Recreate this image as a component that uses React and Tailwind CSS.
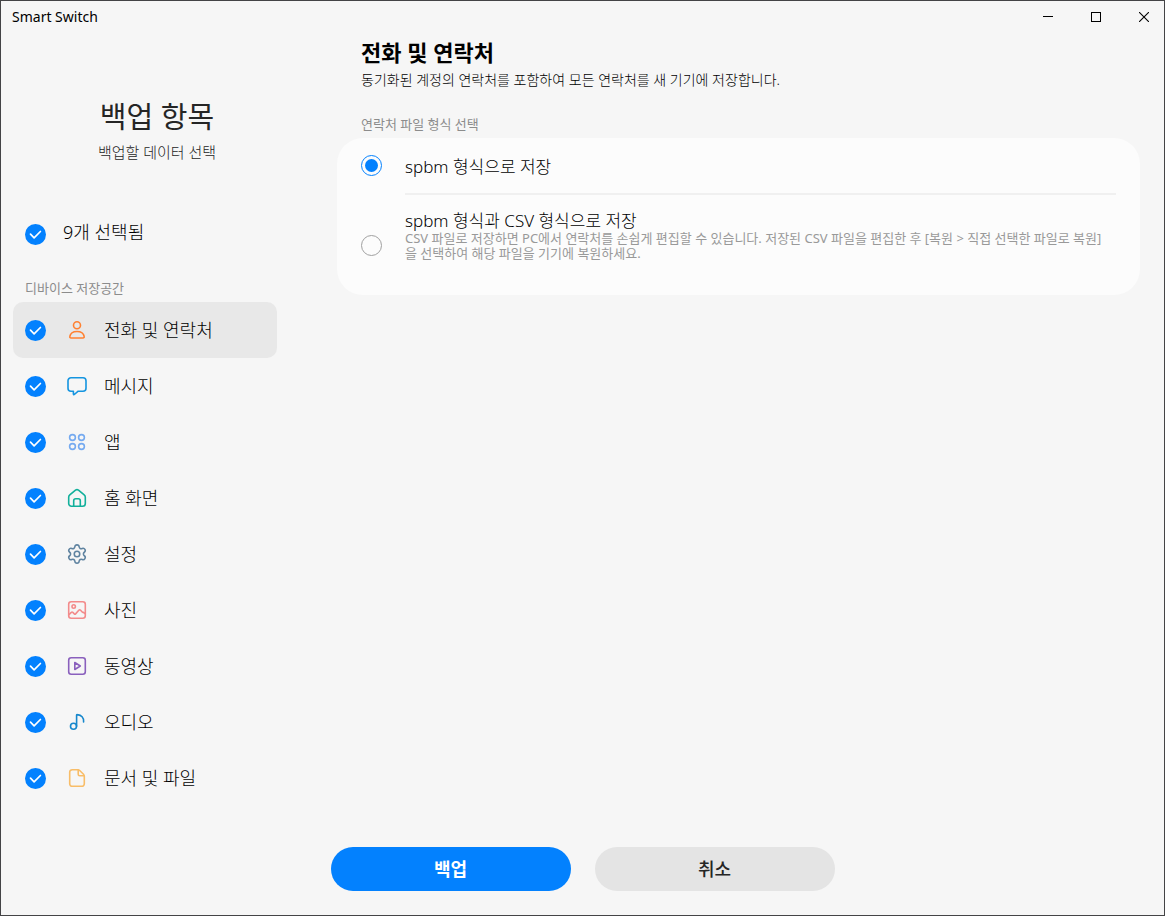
import { useState } from "react";
import { Settings } from "lucide-react";

const Icon = ({ color, children }) => (
  <svg
    width="24"
    height="24"
    viewBox="0 0 24 24"
    fill="none"
    stroke={color}
    strokeWidth="1.6"
    strokeLinecap="round"
    strokeLinejoin="round"
    aria-hidden="true"
  >
    {children}
  </svg>
);

const categories = [
  {
    id: "contacts",
    name: "전화 및 연락처",
    icon: (
      <Icon color="#ff8132">
        <circle cx="12" cy="7.3" r="3.5" />
        <path d="M6 20h12c.9 0 1.4-.6 1.2-1.5C18.6 15.3 15.8 13.5 12 13.5s-6.6 1.8-7.2 5C4.6 19.4 5.1 20 6 20z" />
      </Icon>
    ),
  },
  {
    id: "messages",
    name: "메시지",
    icon: (
      <Icon color="#1595e0">
        <path d="M6 3.7h12a3 3 0 0 1 3 3v7.5a3 3 0 0 1-3 3h-4.8l-3.9 3.3c-.4.4-.9.2-.9-.4v-2.9H6a3 3 0 0 1-3-3V6.7a3 3 0 0 1 3-3z" />
      </Icon>
    ),
  },
  {
    id: "apps",
    name: "앱",
    icon: (
      <Icon color="#75aaf0">
        <circle cx="7.5" cy="7.5" r="2.9" />
        <circle cx="16.5" cy="7.5" r="2.9" />
        <circle cx="7.5" cy="16.5" r="2.9" />
        <circle cx="16.5" cy="16.5" r="2.9" />
      </Icon>
    ),
  },
  {
    id: "home",
    name: "홈 화면",
    icon: (
      <Icon color="#12b09b">
        <path d="M3.7 11.2c0-.9.4-1.7 1.1-2.3l5.7-4.7c.9-.7 2.1-.7 3 0l5.7 4.7c.7.6 1.1 1.4 1.1 2.3v6.3a2.7 2.7 0 0 1-2.7 2.7H6.4a2.7 2.7 0 0 1-2.7-2.7z" />
        <path d="M8.7 20v-5.2a2 2 0 0 1 2-2h2.6a2 2 0 0 1 2 2V20" />
      </Icon>
    ),
  },
  {
    id: "settings",
    name: "설정",
    icon: <Settings size={22} strokeWidth={1.7} color="#5f83a0" />,
  },
  {
    id: "photos",
    name: "사진",
    icon: (
      <Icon color="#f38b8b">
        <rect x="3.7" y="3.7" width="16.6" height="16.6" rx="2.5" />
        <circle cx="8.7" cy="8.5" r="1.7" />
        <path d="M4 16.6l2.3-2.2c.5-.5 1-.5 1.5 0l1.5 1.5c.4.4.9.4 1.3 0l3.2-3.6c.6-.6 1.2-.6 1.8 0l1.6 1.7c.4.4.8.4 1.2.3l1.6 1.2" />
      </Icon>
    ),
  },
  {
    id: "videos",
    name: "동영상",
    icon: (
      <Icon color="#8a60bd">
        <rect x="3.7" y="3.7" width="16.6" height="16.6" rx="2.5" />
        <path d="M9.8 8.5v7l5.5-3.5z" />
      </Icon>
    ),
  },
  {
    id: "audio",
    name: "오디오",
    icon: (
      <Icon color="#1687cc">
        <circle cx="8.5" cy="16.3" r="3" />
        <path d="M11.6 16.3V5.2c0-.5.3-.7.8-.6 3.7.5 6.7 3 6.2 7.4" />
      </Icon>
    ),
  },
  {
    id: "documents",
    name: "문서 및 파일",
    icon: (
      <Icon color="#f8bd68">
        <path d="M7.2 3.7h5.6c.7 0 1.4.3 1.9.8l3.8 3.8c.5.5.8 1.2.8 1.9v7.6a2.5 2.5 0 0 1-2.5 2.5H7.2a2.5 2.5 0 0 1-2.5-2.5V6.2a2.5 2.5 0 0 1 2.5-2.5z" />
        <path d="M13.2 4v4.3c0 .9.6 1.5 1.5 1.5H19" />
      </Icon>
    ),
  },
];

const Checkbox = ({ checked, onChange, ...props }) => (
  <span className="grid size-[21px] shrink-0">
    <input
      type="checkbox"
      checked={checked}
      onChange={onChange}
      className="col-start-1 row-start-1 size-full appearance-none rounded-full border border-[#a0a0a0] checked:border-0 checked:bg-[#0381fe]"
      {...props}
    />
    {checked && (
      <svg
        viewBox="0 0 21 21"
        fill="none"
        stroke="white"
        strokeWidth="1.7"
        strokeLinecap="round"
        strokeLinejoin="round"
        className="pointer-events-none col-start-1 row-start-1 size-full"
      >
        <path d="M5.5 10.2l3.6 3.6 6.3-6.3" />
      </svg>
    )}
  </span>
);

const Radio = ({ checked, onChange, id }) => (
  <span className="grid size-[21px] shrink-0 place-items-center">
    <input
      id={id}
      type="radio"
      name="format"
      checked={checked}
      onChange={onChange}
      className="col-start-1 row-start-1 size-full appearance-none rounded-full border border-[#a0a0a0] checked:border-[#0381fe]"
    />
    {checked && (
      <span className="pointer-events-none col-start-1 row-start-1 size-[13px] rounded-full bg-[#0381fe]"></span>
    )}
  </span>
);

const TitleBar = () => (
  <header className="flex h-8 items-center justify-between pl-[11px]">
    <span className="text-sm">Smart Switch</span>
    <div className="flex gap-2">
      <button aria-label="최소화" className="flex h-8 w-10 items-center justify-center">
        <svg width="10" height="10" stroke="black" shapeRendering="crispEdges">
          <path d="M0 4.5h10" />
        </svg>
      </button>
      <button aria-label="최대화" className="flex h-8 w-10 items-center justify-center">
        <svg width="10" height="10" fill="none" stroke="black" shapeRendering="crispEdges">
          <path d="M.5.5h9v9h-9z" />
        </svg>
      </button>
      <button aria-label="닫기" className="flex h-8 w-10 items-center justify-center">
        <svg width="10" height="10" stroke="black" strokeWidth="1.1">
          <path d="M0 0l10 10M10 0L0 10" />
        </svg>
      </button>
    </div>
  </header>
);

const App = () => {
  const [checked, setChecked] = useState(categories.map((c) => c.id));
  const [active, setActive] = useState("contacts");
  const [format, setFormat] = useState("spbm");

  const toggle = (id) => {
    setChecked(checked.includes(id) ? checked.filter((c) => c !== id) : [...checked, id]);
  };

  const toggleAll = () => {
    setChecked(checked.length ? [] : categories.map((c) => c.id));
  };

  return (
    <div className="flex min-h-screen flex-col border border-[#444446] bg-[#f6f6f6] font-['Noto_Sans','Noto_Sans_CJK_KR',sans-serif] text-black">
      <TitleBar />

      <div className="flex flex-1">
        <aside className="ml-3 w-72 shrink-0 pt-16">
          <h1 className="text-center text-[29px] leading-10 text-[#252525]">백업 항목</h1>
          <p className="mt-[5px] text-center text-[15px] leading-5 font-light text-[#252525]">
            백업할 데이터 선택
          </p>

          <label className="mt-11 flex h-14 items-center gap-[17px] pl-3">
            <Checkbox checked={checked.length > 0} onChange={toggleAll} />
            <span className="pb-1 text-lg font-light">{checked.length}개 선택됨</span>
          </label>

          <h2 className="mt-4 pl-3 text-[13px] leading-5 text-[#8c8c8c]">디바이스 저장공간</h2>
          <ul className="mt-1 mr-6">
            {categories.map((c) => (
              <li
                key={c.id}
                className={`flex h-14 items-center rounded-[10px] pl-3 ${
                  active === c.id ? "bg-[#e8e8e8]" : ""
                }`}
              >
                <Checkbox
                  checked={checked.includes(c.id)}
                  onChange={() => toggle(c.id)}
                  aria-labelledby={c.id}
                />
                <button
                  id={c.id}
                  onClick={() => setActive(c.id)}
                  className="ml-[19px] flex h-full flex-1 items-center gap-[15px] text-left text-lg font-light"
                >
                  <span className="flex size-6 items-center justify-center">{c.icon}</span>
                  {c.name}
                </button>
              </li>
            ))}
          </ul>
        </aside>

        <main className="mr-6 ml-9 min-w-0 flex-1 pt-[3px]">
          <h2 className="pl-6 text-[22px] leading-8 font-bold">전화 및 연락처</h2>
          <p className="pl-6 text-sm leading-6 font-light">
            동기화된 계정의 연락처를 포함하여 모든 연락처를 새 기기에 저장합니다.
          </p>

          <h3 className="mt-6 pl-6 text-[13px] leading-4 text-[#8c8c8c]">
            연락처 파일 형식 선택
          </h3>
          <div className="mt-1.5 rounded-[26px] bg-[#fcfcfc] px-6">
            <label className="flex h-[55px] items-center gap-[23px]">
              <Radio id="spbm" checked={format === "spbm"} onChange={() => setFormat("spbm")} />
              <span className="pt-0.5 text-[17px] leading-5 font-light">spbm 형식으로 저장</span>
            </label>
            <div className="ml-11 h-0.5 bg-[#f0f0f0]"></div>
            <label className="flex items-center gap-[23px]">
              <Radio id="csv" checked={format === "csv"} onChange={() => setFormat("csv")} />
              <span className="flex flex-col pt-4 pb-[34px]">
                <span className="text-[17px] leading-5 font-light">
                  spbm 형식과 CSV 형식으로 저장
                </span>
                <span className="pr-3 text-[13px] leading-[15px] text-[#999999]">
                  CSV 파일로 저장하면 PC에서 연락처를 손쉽게 편집할 수 있습니다. 저장된 CSV 파일을
                  편집한 후 [복원 &gt; 직접 선택한 파일로 복원]을 선택하여 해당 파일을 기기에
                  복원하세요.
                </span>
              </span>
            </label>
          </div>
        </main>
      </div>

      <footer className="flex justify-center gap-6 pb-6">
        <button className="h-11 w-60 rounded-full bg-[#0381fe] text-lg font-bold text-white">
          백업
        </button>
        <button className="h-11 w-60 rounded-full bg-[#e4e4e4] text-lg font-medium text-[#252525]">
          취소
        </button>
      </footer>
    </div>
  );
};

export default App;
